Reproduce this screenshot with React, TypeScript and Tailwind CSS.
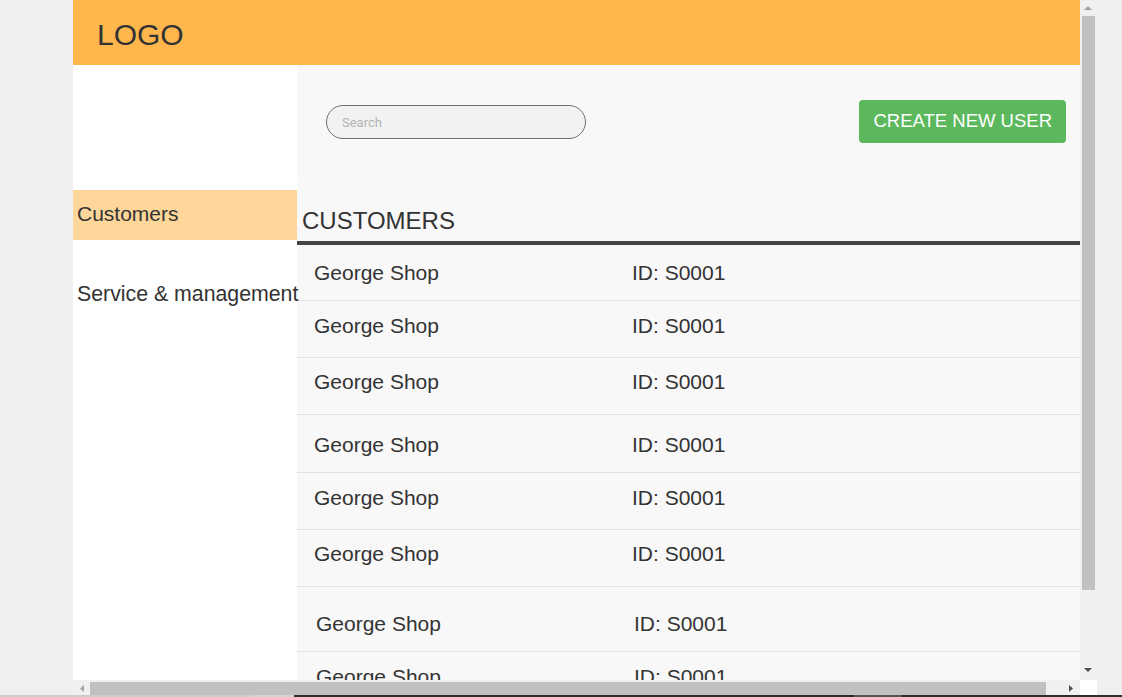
import React from 'react'

type TRow = { box: string; shift: string }

// hand-tuned row boxes, the list in the picture is not evenly spaced
const rows: TRow[] = [
  { box: 'h-[56px] pt-[16px]', shift: 'pl-[17px]' },
  { box: 'h-[57px] pt-[13px]', shift: 'pl-[17px]' },
  { box: 'h-[57px] pt-[12px]', shift: 'pl-[17px]' },
  { box: 'h-[58px] pt-[18px]', shift: 'pl-[17px]' },
  { box: 'h-[57px] pt-[13px]', shift: 'pl-[17px]' },
  { box: 'h-[57px] pt-[12px]', shift: 'pl-[17px]' },
  { box: 'h-[65px] pt-[25px]', shift: 'pl-[19px]' },
  { box: 'h-[57px] pt-[13px]', shift: 'pl-[19px]' },
]

function Arrow({ dir, dark }: { dir: 'up' | 'down' | 'left' | 'right'; dark?: boolean }) {
  const fill = dark ? '#505050' : '#a3a3a3'
  if (dir === 'up' || dir === 'down') {
    return (
      <svg width="8" height="4" viewBox="0 0 8 4">
        <polygon points={dir === 'up' ? '0,4 4,0 8,4' : '0,0 8,0 4,4'} fill={fill} />
      </svg>
    )
  }
  return (
    <svg width="4" height="7" viewBox="0 0 4 7">
      <polygon points={dir === 'left' ? '4,0 0,3.5 4,7' : '0,0 4,3.5 0,7'} fill={fill} />
    </svg>
  )
}

function Sidebar() {
  return (
    <aside className="relative z-10 flex w-[224px] shrink-0 flex-col bg-white text-[21px] leading-[24px]">
      <div className="h-[125px]" />
      <div className="h-[50px] bg-[#ffd699] pl-[4px] pt-[12px]">Customers</div>
      <div className="mt-[42px] whitespace-nowrap pl-[4px] text-[21.3px]">Service &amp; management</div>
    </aside>
  )
}

function CustomerList() {
  return (
    <div className="flex flex-col">
      <div className="h-[60px] pl-[5px] pt-[26px] text-[24px] leading-[28px]">CUSTOMERS</div>
      <div className="h-[4px] bg-[#444444]" />
      {rows.map((row, i) => (
        <div key={i} className={`flex shrink-0 border-b border-[#e2e2e2] text-[21px] leading-[24px] ${row.box} ${row.shift}`}>
          <span className="w-[318px]">George Shop</span>
          <span>ID: S0001</span>
        </div>
      ))}
    </div>
  )
}

export default function App() {
  return (
    <div className="flex h-[697px] w-[1122px] flex-col overflow-hidden bg-[#efefef] font-['Liberation_Sans',Arial,sans-serif] text-[#333333]">
      <div className="flex h-[695px]">
        <div className="w-[73px] shrink-0" />
        <div className="flex w-[1024px] flex-col">
          <div className="flex h-[680px]">
            <div className="flex w-[1007px] flex-col overflow-hidden">
              <header className="h-[65px] shrink-0 bg-[#ffb74d] pl-[24px] pt-[17px] text-[30px] leading-[36px]">LOGO</header>
              <div className="flex flex-1">
                <Sidebar />
                <main className="flex flex-1 flex-col overflow-hidden bg-[#f8f8f8]">
                  <div className="flex h-[116px] shrink-0 items-center justify-between border-b border-[#fbfbfb] pb-[1px] pl-[29px] pr-[14px]">
                    <input
                      placeholder="Search"
                      className="h-[34px] w-[260px] rounded-full border border-[#707070] bg-[#f2f2f2] pl-[15px] pt-[1px] font-['Roboto',sans-serif] text-[13px] outline-none placeholder:text-[#b3b3b3]"
                    />
                    <button className="mb-[2px] h-[43px] rounded-[4px] bg-[#5cb85c] px-[14px] text-[18.5px] text-white">
                      CREATE NEW USER
                    </button>
                  </div>
                  <CustomerList />
                </main>
              </div>
            </div>
            <div className="flex w-[17px] flex-col bg-[#f0f0f0]">
              <div className="flex h-[16px] items-start justify-center pt-[6px] pr-[1px]">
                <Arrow dir="up" />
              </div>
              <div className="ml-[2px] h-[574px] w-[13px] bg-[#c1c1c1]" />
              <div className="flex-1" />
              <div className="flex h-[16px] items-start justify-center pt-[4px] pr-[1px]">
                <Arrow dir="down" dark />
              </div>
            </div>
          </div>
          <div className="flex h-[15px]">
            <div className="flex w-[1007px] bg-[#f0f0f0]">
              <div className="flex w-[17px] items-center justify-center pl-[1px] pt-[2px]">
                <Arrow dir="left" />
              </div>
              <div className="mt-[2px] h-[13px] w-[956px] bg-[#c1c1c1]" />
              <div className="flex flex-1 items-center justify-end pr-[7px] pt-[2px]">
                <Arrow dir="right" dark />
              </div>
            </div>
            <div className="w-[17px] bg-white" />
          </div>
        </div>
      </div>
      <div className="flex h-[2px]">
        <div className="w-[253px] bg-[#cccccc]" />
        <div className="w-[41px] bg-[#d6d6d6]" />
        <div className="w-[560px] bg-[#2d2d2d]" />
        <div className="w-[48px] bg-[#565656]" />
        <div className="flex-1 bg-[#2d2d2d]" />
      </div>
    </div>
  )
}
